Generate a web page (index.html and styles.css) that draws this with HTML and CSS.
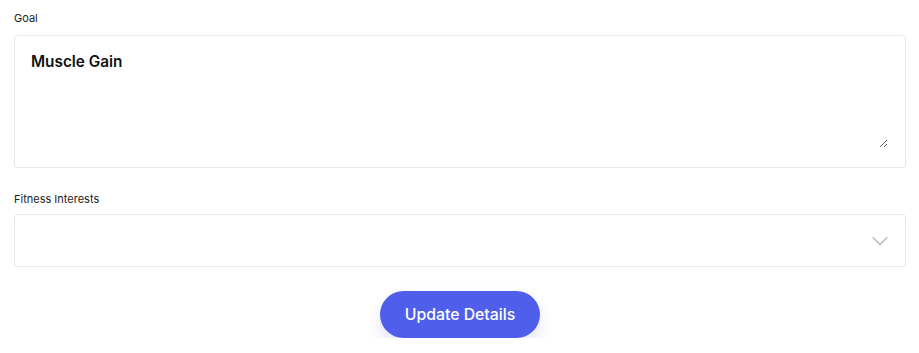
FILE: index.html
```html
<!DOCTYPE html>
<html>
<head>
<meta charset="utf-8">
<link rel="stylesheet" href="styles.css">
</head>
<body>
<form class="form">
  <div class="field">
    <label class="label">Goal</label>
    <div class="textarea-box">
      <textarea class="textarea">Muscle Gain</textarea>
    </div>
  </div>
  <div class="field field-second">
    <label class="label">Fitness Interests</label>
    <div class="select">
      <svg class="chevron" width="16" height="10" viewBox="0 0 16 10"><path d="M1 1.5 L8 8.5 L15 1.5" fill="none" stroke="#b5b5b5" stroke-width="1.4"/></svg>
    </div>
  </div>
  <div class="actions">
    <button type="button" class="btn">Update Details</button>
  </div>
</form>
</body>
</html>
```
FILE: styles.css
```css
html, body {
  margin: 0;
  padding: 0;
  background: #fff;
}
body {
  font-family: "Inter", "Lato", sans-serif;
  color: #111;
}
.form {
  padding: 10px 13px 0 14px;
  display: flex;
  flex-direction: column;
}
.field {
  display: flex;
  flex-direction: column;
}
.field-second {
  margin-top: 23px;
}
.label {
  font-size: 11px;
  line-height: 16px;
  color: #222;
  margin-bottom: 9px;
}
.field-second .label {
  margin-bottom: 7px;
}
.textarea-box {
  box-sizing: border-box;
  height: 133px;
  border: 1px solid #e8e8e8;
  border-radius: 4px;
  padding: 15px 17px 19px 16px;
  display: flex;
}
.textarea {
  flex: 1;
  border: none;
  padding: 0;
  margin: 0;
  font-family: "Inter", "Lato", sans-serif;
  font-weight: 600;
  font-size: 15.3px;
  line-height: 22px;
  color: #111;
  outline: none;
  resize: vertical;
  background: transparent;
}
.select {
  box-sizing: border-box;
  height: 53px;
  border: 1px solid #e8e8e8;
  border-radius: 4px;
  display: flex;
  align-items: center;
  justify-content: flex-end;
  padding-right: 17px;
}
.chevron {
  display: block;
  margin-top: 1px;
}
.actions {
  display: flex;
  justify-content: center;
  margin-top: 24px;
}
.btn {
  width: 160px;
  height: 47px;
  border: none;
  border-radius: 24px;
  background: #4f5fec;
  color: #fff;
  font-family: "Inter", "Lato", sans-serif;
  font-weight: 500;
  font-size: 15.8px;
  box-shadow: 0 9px 16px rgba(79, 95, 236, 0.16);
  cursor: pointer;
}
```
